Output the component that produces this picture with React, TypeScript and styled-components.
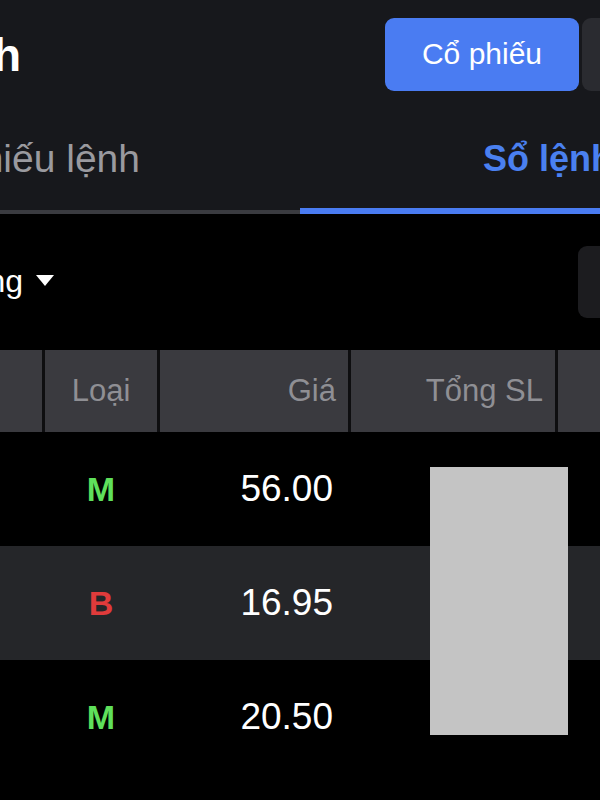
import React from "react";
import styled, { createGlobalStyle } from "styled-components";

const orders = [
  { side: "M", price: "56.00" },
  { side: "B", price: "16.95" },
  { side: "M", price: "20.50" },
];

const COLS = "42px 112px 188px 204px 1fr";

const OrderBook = () => {
  return (
    <Page>
      <GlobalStyle />
      <TopBar>
        <TitleRow>
          <Clip $width={21}>
            <Title>Giao dịch</Title>
          </Clip>
          <Segmented>
            <Segment $active>Cổ phiếu</Segment>
            <Segment>Phái sinh</Segment>
          </Segmented>
        </TitleRow>
        <Tabs>
          <Tab>
            <TabLabel $align="end">Phiếu lệnh</TabLabel>
          </Tab>
          <Tab $active>
            <TabLabel $active>Sổ lệnh</TabLabel>
          </Tab>
        </Tabs>
      </TopBar>

      <FilterRow>
        <Dropdown>
          <Clip $width={23}>
            <DropdownText>Tiểu khoản thường</DropdownText>
          </Clip>
          <svg width="18" height="12" viewBox="0 0 18 12">
            <polygon points="0,0 18,0 9,11" fill="#fff" />
          </svg>
        </Dropdown>
        <SearchBox />
      </FilterRow>

      <HeaderRow>
        <HeadCell />
        <HeadCell $align="center">Loại</HeadCell>
        <HeadCell $align="right">Giá</HeadCell>
        <HeadCell $align="right">Tổng SL</HeadCell>
        <HeadCell />
      </HeaderRow>

      <Body>
        {orders.map((o, i) => (
          <Row key={i} $striped={i % 2 === 1}>
            <Cell />
            <Side $buy={o.side === "M"}>{o.side}</Side>
            <Price>{o.price}</Price>
            <Cell />
            <Cell />
          </Row>
        ))}
        <Redacted />
      </Body>
    </Page>
  );
};

export default OrderBook;

const GlobalStyle = createGlobalStyle`
  body {
    margin: 0;
    background: #000;
  }
`;

const Page = styled.div`
  width: 600px;
  height: 800px;
  overflow: hidden;
  background: #000;
  font-family: "Liberation Sans", Arial, sans-serif;
  color: #fff;
`;

const TopBar = styled.div`
  background: #17181c;
`;

const TitleRow = styled.div`
  display: grid;
  grid-template-columns: 385px 1fr;
  height: 110px;
  padding-top: 18px;
  box-sizing: border-box;
`;

const Clip = styled.div<{ $width: number }>`
  width: ${(p) => p.$width}px;
  min-width: 0;
  overflow: hidden;
  display: flex;
  justify-content: flex-end;
  white-space: nowrap;
`;

const Title = styled.span`
  font-size: 46px;
  line-height: 46px;
  font-weight: 700;
  margin-top: 14px;
`;

const Segmented = styled.div`
  display: flex;
  gap: 3px;
  height: 73px;
`;

const Segment = styled.div<{ $active?: boolean }>`
  flex-shrink: 0;
  width: ${(p) => (p.$active ? "194px" : "160px")};
  border-radius: 9px;
  background: ${(p) => (p.$active ? "#4a7cf2" : "#2a2b30")};
  color: ${(p) => (p.$active ? "#fff" : "#8e8e93")};
  display: flex;
  align-items: center;
  justify-content: center;
  font-size: 30px;
  padding-bottom: 2px;
  box-sizing: border-box;
`;

const Tabs = styled.div`
  display: grid;
  grid-template-columns: 300px 300px;
  height: 104px;
`;

const Tab = styled.div<{ $active?: boolean }>`
  display: flex;
  min-width: 0;
  overflow: hidden;
  padding-bottom: 6px;
  box-shadow: ${(p) =>
    p.$active ? "inset 0 -6px 0 #4a7cf2" : "inset 0 -4px 0 #3a3b40, inset 0 -1px 0 #17181c"};
`;

const TabLabel = styled.div<{ $active?: boolean; $align?: "end" }>`
  flex: 1;
  min-width: 0;
  overflow: hidden;
  display: flex;
  align-items: center;
  justify-content: ${(p) => (p.$align === "end" ? "flex-end" : "flex-start")};
  padding: ${(p) => (p.$align === "end" ? "0 160px 0 0" : "0 0 0 183px")};
  white-space: nowrap;
  font-size: ${(p) => (p.$active ? "36px" : "39px")};
  font-weight: ${(p) => (p.$active ? 700 : 400)};
  color: ${(p) => (p.$active ? "#4a80f0" : "#9a9a9f")};
`;

const FilterRow = styled.div`
  display: flex;
  align-items: center;
  height: 136px;
`;

const Dropdown = styled.div`
  display: flex;
  align-items: center;
  gap: 13px;
  padding-bottom: 2px;
`;

const DropdownText = styled.span`
  font-size: 32px;
  color: #fff;
`;

const SearchBox = styled.div`
  margin-left: auto;
  margin-right: -40px;
  width: 62px;
  height: 72px;
  border-radius: 9px;
  background: #1c1c1f;
`;

const HeaderRow = styled.div`
  display: grid;
  grid-template-columns: ${COLS};
  column-gap: 3px;
  height: 82px;
  background: #0e0e10;
`;

const HeadCell = styled.div<{ $align?: "center" | "right" }>`
  background: #3a3a3f;
  display: flex;
  align-items: center;
  justify-content: ${(p) =>
    p.$align === "center" ? "center" : p.$align === "right" ? "flex-end" : "flex-start"};
  padding-right: ${(p) => (p.$align === "right" ? "12px" : "0")};
  font-size: 31px;
  color: #8f8f94;
  white-space: nowrap;
`;

const Body = styled.div`
  position: relative;
`;

const Row = styled.div<{ $striped?: boolean }>`
  display: grid;
  grid-template-columns: ${COLS};
  column-gap: 3px;
  height: 114px;
  background: ${(p) => (p.$striped ? "#252629" : "#000")};
`;

const Cell = styled.div``;

const Side = styled.div<{ $buy?: boolean }>`
  display: flex;
  align-items: center;
  justify-content: center;
  font-size: 34px;
  font-weight: 700;
  color: ${(p) => (p.$buy ? "#5fe05b" : "#e03b3b")};
`;

const Price = styled.div`
  display: flex;
  align-items: center;
  justify-content: flex-end;
  padding-right: 15px;
  font-size: 37px;
  color: #fff;
`;

const Redacted = styled.div`
  position: absolute;
  left: 430px;
  top: 35px;
  width: 138px;
  height: 268px;
  background: #c4c4c4;
`;
